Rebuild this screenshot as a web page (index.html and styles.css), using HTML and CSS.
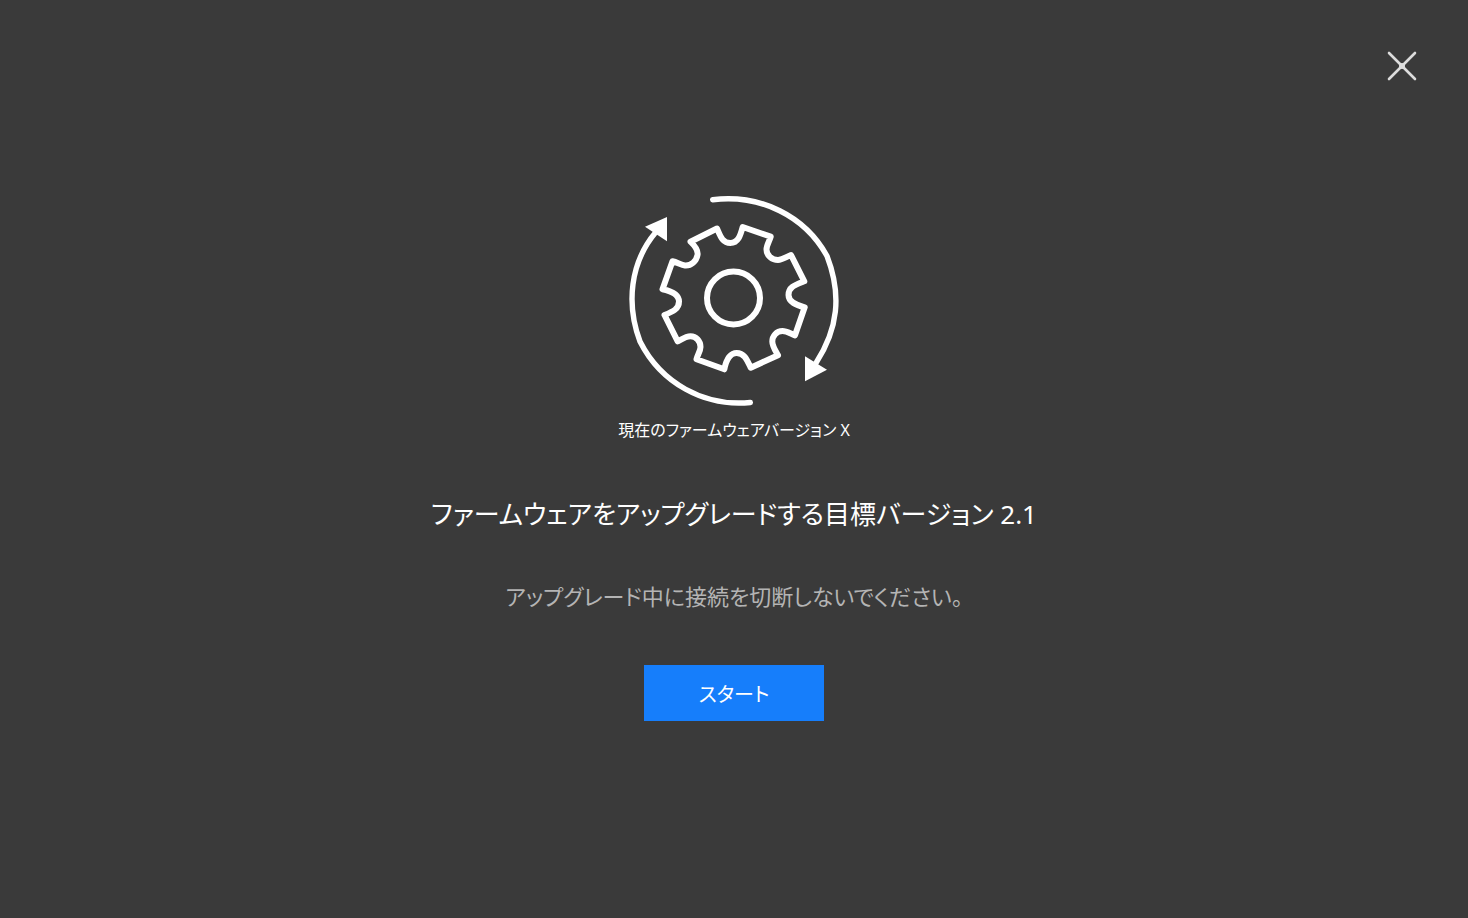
FILE: index.html
```html
<!DOCTYPE html>
<html lang="ja">
<head>
    <meta charset="UTF-8">
    <meta name="viewport" content="width=device-width, initial-scale=1.0">
    <title>ファームウェアアップグレード</title>
    <link rel="stylesheet" href="styles.css">
</head>
<body>

    <header class="top-bar">
        <button class="close-button" type="button" aria-label="閉じる">
            <svg width="30" height="30" viewBox="0 0 30 30" aria-hidden="true">
                <path d="M2 2 L28 28 M28 2 L2 28"/>
                <circle cx="15" cy="15" r="3"/>
            </svg>
        </button>
    </header>

    <main class="upgrade">
        <!-- Gear with rotating arrows -->
        <svg class="gear" viewBox="0 0 220 220" aria-hidden="true">
            <path class="line" d="M93 38.500 L66.500 51.700 C71 56 74.500 60 73.500 65 C72.500 71 67 76 61 75.500 C57 75 53 72 48.500 71.200 L38.500 99.200 C47 101 55 104 55 111.500 C55 119 49 121.500 40.500 125 L53.700 151.300 C58 149 62 146.200 66.500 146.200 C72 146.200 76.500 151 76.500 157 C76.500 161 73.500 165 72.500 169.300 L100.300 179.300 C102 171 105 163 112.700 163 C120.500 163 123 170 126.700 177.700 L154 165.300 C151 160 148.300 156 148.300 151.500 C148.300 146 152.500 141 158.500 141 C163 141 167 144 171 145.300 L180.700 117.300 C172 115 164.500 112 164.500 105 C164.500 97 171 95 180.300 91.300 L167 65 C162 67 158.500 70 154 70 C148 70 142.500 65.500 142.500 59.500 C142.500 55 145.500 51 146.700 46.700 L118.700 37 C116.500 45 114.500 53 106.300 53 C98 53 96 45 93 38.500 Z"/>
            <circle class="line" cx="109.500" cy="108" r="26.500"/>
            <path class="arc" d="M88.700 9.700 C137 4 181 26 203 66 C218 105 214 139 192 173"/>
            <path class="arc" d="M31.700 42.300 C6 73 2 114 16 151.500 C37 193 80 217 126.300 212.500"/>
            <path class="arrow" d="M43 27 L21 36.700 L43 51.300 Z"/>
            <path class="arrow" d="M181 166.300 L203 179.700 L181 191.300 Z"/>
        </svg>

        <p class="current-version">現在のファームウェアバージョン X</p>
        <h1>ファームウェアをアップグレードする目標バージョン 2.1</h1>
        <p class="warning">アップグレード中に接続を切断しないでください。</p>
        <button class="start-button" type="button">スタート</button>
    </main>

</body>
</html>
```
FILE: styles.css
```css
* {
    box-sizing: border-box;
}

body {
    margin: 0;
    min-height: 100vh;
    background: #3a3a3a;
    color: white;
    font-family: "Noto Sans", "Noto Sans CJK JP", sans-serif;
    font-feature-settings: "palt";
}

/* Close button */
.top-bar {
    display: flex;
    justify-content: flex-end;
    padding: 51px 51px 0;
}

.close-button {
    display: flex;
    padding: 0;
    border: none;
    background: none;
    cursor: pointer;
}

.close-button path {
    stroke: #dcdcdc;
    stroke-width: 2.6;
    stroke-linecap: round;
}

.close-button circle {
    fill: #dcdcdc;
}

/* Main content */
.upgrade {
    display: flex;
    flex-direction: column;
    align-items: center;
    padding: 109px 24px 40px;
    text-align: center;
}

.gear {
    width: 220px;
    height: 220px;
}

.line,
.arc {
    fill: none;
    stroke: white;
    stroke-width: 6;
    stroke-linecap: round;
    stroke-linejoin: round;
}

.arc {
    stroke-width: 5.4;
}

.arrow {
    fill: white;
}

.current-version {
    margin: 8px 0 0;
    font-size: 16px;
    line-height: 24px;
}

h1 {
    margin: 52px 0 0;
    font-size: 26px;
    font-weight: 400;
    line-height: 40px;
}

.warning {
    margin: 46px 0 0;
    color: #b4b4b4;
    font-size: 22px;
    line-height: 32px;
}

.start-button {
    width: 180px;
    height: 56px;
    margin-top: 53px;
    padding: 0;
    border: none;
    background: #167efb;
    color: white;
    font: inherit;
    font-feature-settings: inherit;
    font-size: 20px;
    cursor: pointer;
}

.start-button:hover {
    background: #3a93ff;
}
```
